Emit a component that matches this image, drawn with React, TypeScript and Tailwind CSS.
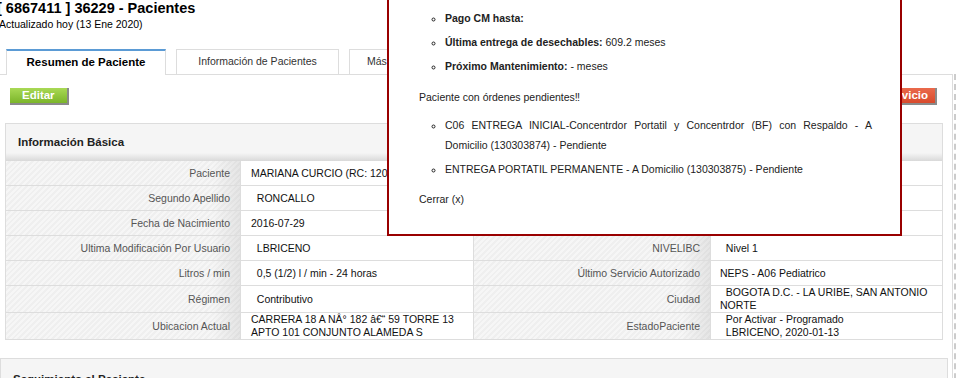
const infoRows = [
  { label: "Paciente", value: "MARIANA CURCIO (RC: 1201658493)", label2: "", value2: "" },
  { label: "Segundo Apellido", value: "\u00a0\u00a0RONCALLO", label2: "", value2: "" },
  { label: "Fecha de Nacimiento", value: "2016-07-29", label2: "", value2: "" },
  { label: "Ultima Modificación Por Usuario", value: "\u00a0\u00a0LBRICENO", label2: "NIVELIBC", value2: "\u00a0\u00a0Nivel 1" },
  { label: "Litros / min", value: "\u00a0\u00a00,5 (1/2) l / min - 24 horas", label2: "Último Servicio Autorizado", value2: "NEPS - A06 Pediatrico" },
  { label: "Régimen", value: "\u00a0\u00a0Contributivo", label2: "Ciudad", value2: "\u00a0\u00a0BOGOTA D.C. - LA URIBE, SAN ANTONIO NORTE" },
  {
    label: "Ubicacion Actual",
    value: "CARRERA 18 A NÂ° 182 â€\u201c 59 TORRE 13 APTO 101 CONJUNTO ALAMEDA S",
    label2: "EstadoPaciente",
    value2: "\u00a0\u00a0Por Activar - Programado\n\u00a0\u00a0LBRICENO, 2020-01-13",
  },
];

const labelCell =
  "flex min-h-[24px] items-center justify-end border-r border-[#dddddd] pr-[10px] text-right text-[#555] [background-image:linear-gradient(to_right,rgba(255,255,255,0)_88%,rgba(0,0,0,0.07)_100%),repeating-linear-gradient(135deg,#f6f6f6_0px,#f6f6f6_2px,#efefef_2px,#efefef_4px)]";

function Button({ children, color }: { children: React.ReactNode; color: "green" | "red" }) {
  const look =
    color === "green"
      ? "bg-[linear-gradient(to_bottom,#a9d955,#7bb52a)] px-[12px]"
      : "bg-[linear-gradient(to_bottom,#ea6a4c,#d84a2c)] pl-[12px] pr-[7px]";
  return (
    <button
      className={`${look} h-[17px] border-r-2 border-b-2 border-[#8a8a8a] text-[11.5px] font-bold leading-[15px] text-white`}
    >
      {children}
    </button>
  );
}

function InfoTable() {
  return (
    <div className="ml-[5px] w-[938px] border border-[#dddddd]">
      <div className="flex h-[37px] items-center pl-[12px] text-[11.5px] font-bold text-[#222] bg-[linear-gradient(to_bottom,#f5f5f5_0%,#f5f5f5_78%,#d9d9d9_100%)]">
        Información Básica
      </div>
      {infoRows.map((r, i) => (
        <div
          key={r.label}
          className={`grid grid-cols-[235px_233px_237px_1fr] leading-[13px] ${i < infoRows.length - 1 ? "border-b border-[#dddddd]" : ""}`}
        >
          <div className={labelCell}>{r.label}</div>
          <div className="flex items-center border-r border-[#dddddd] pl-[10px] text-[#111]">{r.value}</div>
          <div className={labelCell}>{r.label2}</div>
          <div className="flex items-center whitespace-pre-line pl-[9px] text-[#111]">{r.value2}</div>
        </div>
      ))}
    </div>
  );
}

function PendingPopup() {
  return (
    <div className="absolute left-[387px] top-[-2px] w-[515px] border-2 border-[#990000] bg-white pb-[25px] pl-[30px] pr-[28px] pt-[8px] text-[10.5px] text-[#222]">
      <ul className="list-[circle] space-y-[4px] pl-[26px] leading-[20px]">
        <li>
          <b>Pago CM hasta:</b>
        </li>
        <li>
          <b>Última entrega de desechables:</b> 609.2 meses
        </li>
        <li>
          <b>Próximo Mantenimiento:</b> - meses
        </li>
      </ul>
      <p className="mt-[11px] leading-[20px]">Paciente con órdenes pendientes‼</p>
      <ul className="mt-[8px] list-[circle] space-y-[4px] pl-[26px] leading-[20px]">
        <li className="text-justify">
          C06 ENTREGA INICIAL-Concentrdor Portatil y Concentrdor (BF) con Respaldo - A Domicilio (130303874) - Pendiente
        </li>
        <li>ENTREGA PORTATIL PERMANENTE - A Domicilio (130303875) - Pendiente</li>
      </ul>
      <p className="mt-[10px] leading-[20px]">Cerrar (x)</p>
    </div>
  );
}

export default function App() {
  return (
    <div className="relative h-[378px] w-[969px] overflow-hidden bg-white font-['Liberation_Sans',Arial,sans-serif] text-[10.5px] text-[#222]">
      <h1 className="ml-[-3px] text-[14.5px] font-bold leading-[16px] text-black">[ 6867411 ] 36229 - Pacientes</h1>
      <p className="ml-[-1px] mt-[2px] leading-[13px] text-black">Actualizado hoy (13 Ene 2020)</p>

      {/* tabs */}
      <div className="mt-[18px] flex items-end gap-[10px] pl-[6px]">
        <div className="relative z-10 -mb-px flex h-[26px] w-[160px] items-center justify-center border-x border-t-2 border-[#dddddd] border-t-[#5b9bd5] bg-white pb-px text-[11.5px] font-bold text-black">
          Resumen de Paciente
        </div>
        <div className="flex h-[25px] w-[163px] items-center justify-center border-x border-t border-[#dddddd] text-[#333]">
          Información de Pacientes
        </div>
        <div className="flex h-[25px] items-center border-x border-t border-[#dddddd] px-[17px] text-[#333]">
          Más Información
        </div>
      </div>

      <div className="w-[956px] border-r-2 border-dashed border-[#cccccc]">
        <div className="w-[953px] border-r border-t border-[#dddddd] pb-[40px]">
          <div className="flex justify-between pl-[10px] pr-[15px] pt-[13px]">
            <Button color="green">Editar</Button>
            <Button color="red">Nuevo Servicio</Button>
          </div>

          <div className="mt-[18px]">
            <InfoTable />
          </div>

          <div className="mt-[18px] w-[948px] border border-[#dddddd] bg-[#f5f5f5] pb-[20px] pl-[12px] pt-[12px] text-[11.5px] font-bold text-[#222]">
            Seguimiento al Paciente
          </div>
        </div>
      </div>

      <PendingPopup />
    </div>
  );
}
